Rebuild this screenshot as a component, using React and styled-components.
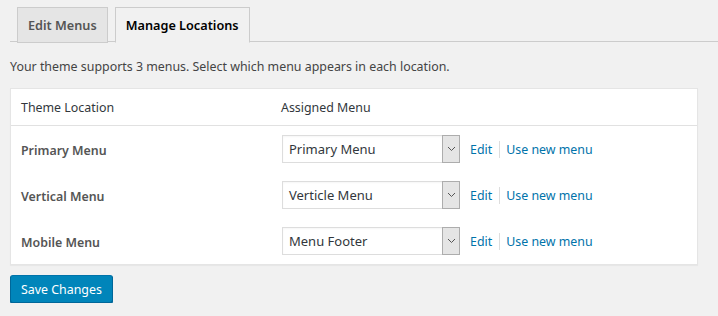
import React from "react";
import styled, { createGlobalStyle } from "styled-components";

const Global = createGlobalStyle`
  html, body { margin: 0; padding: 0; background: #f1f1f1; }
  body { font-family: "Noto Sans", "Open Sans", sans-serif; font-size: 12.4px; color: #444; }
  * { box-sizing: border-box; }
`;

const Wrap = styled.div`
  padding: 7px 0 0 10px;
`;

const Tabs = styled.div`
  display: flex;
  gap: 7px;
  padding-left: 7px;
  border-bottom: 1px solid #ccc;
  height: 35px;
`;

const Tab = styled.div`
  height: 36px;
  padding: 0 10px;
  display: flex;
  align-items: center;
  border: 1px solid #ccc;
  border-bottom-color: ${(p) => (p.$active ? "#f1f1f1" : "#ccc")};
  background: ${(p) => (p.$active ? "#f1f1f1" : "#e5e5e5")};
  color: ${(p) => (p.$active ? "#000" : "#555")};
  font-size: 12.7px;
  font-weight: 600;
`;

const Desc = styled.p`
  margin: 15px 0 0;
  line-height: 20px;
  color: #444;
`;

const Table = styled.div`
  margin: 11px 20px 0 0;
  background: #fff;
  border: 1px solid #e5e5e5;
  box-shadow: 0 1px 1px rgba(0, 0, 0, 0.04);
`;

const HeadRow = styled.div`
  display: grid;
  grid-template-columns: 260px 1fr;
  padding-left: 10px;
  height: 37px;
  align-items: center;
  border-bottom: 1px solid #e1e1e1;
  color: #32373c;
`;

const Row = styled.div`
  display: grid;
  grid-template-columns: 260px 1fr;
  padding-left: 10px;
  height: 46px;
  align-items: center;
`;

const Label = styled.div`
  font-weight: 600;
  color: #555;
  padding-top: 3px;
`;

const Cell = styled.div`
  display: flex;
  align-items: center;
`;

const Select = styled.div`
  width: 178px;
  height: 28px;
  margin-left: 1px;
  border: 1px solid #ddd;
  background: #fff;
  display: flex;
  align-items: stretch;
  color: #32373c;
  font-size: 13px;
  box-shadow: inset 0 1px 2px rgba(0, 0, 0, 0.04);
`;

const SelectText = styled.div`
  flex: 1;
  display: flex;
  align-items: center;
  padding-left: 6px;
`;

const Arrow = styled.div`
  width: 18px;
  margin: -1px -1px -1px 0;
  background: #e5e5e5;
  border: 1px solid #adadad;
  display: flex;
  align-items: center;
  justify-content: center;
`;

const Link = styled.a`
  color: #0073aa;
  text-decoration: none;
  margin-left: ${(p) => p.$ml || "0"};
`;

const Sep = styled.span`
  width: 1px;
  height: 17px;
  background: #ddd;
  margin: 0 6px 0 7px;
`;

const Button = styled.button`
  margin-top: 10px;
  height: 28px;
  padding: 0 10px;
  white-space: nowrap;
  background: #0085ba;
  border: 1px solid #0073aa;
  border-color: #0073aa #006799 #006799;
  border-radius: 3px;
  box-shadow: 0 1px 0 #006799;
  color: #fff;
  font-family: inherit;
  font-size: 12.4px;
  cursor: pointer;
`;

const rows = [
  ["Primary Menu", "Primary Menu"],
  ["Vertical Menu", "Verticle Menu"],
  ["Mobile Menu", "Menu Footer"],
];

const Chevron = () => (
  <svg width="9" height="6" viewBox="0 0 9 6">
    <path d="M1 1 L4.5 4.5 L8 1" fill="none" stroke="#555" strokeWidth="1" />
  </svg>
);

export default function App() {
  return (
    <>
      <Global />
      <Wrap>
        <Tabs>
          <Tab>Edit Menus</Tab>
          <Tab $active>Manage Locations</Tab>
        </Tabs>
        <Desc>Your theme supports 3 menus. Select which menu appears in each location.</Desc>
        <Table>
          <HeadRow>
            <div>Theme Location</div>
            <div>Assigned Menu</div>
          </HeadRow>
          {rows.map(([loc, menu]) => (
            <Row key={loc}>
              <Label>{loc}</Label>
              <Cell>
                <Select>
                  <SelectText>{menu}</SelectText>
                  <Arrow>
                    <Chevron />
                  </Arrow>
                </Select>
                <Link href="#" $ml="10px">Edit</Link>
                <Sep />
                <Link href="#">Use new menu</Link>
              </Cell>
            </Row>
          ))}
        </Table>
        <Button>Save Changes</Button>
      </Wrap>
    </>
  );
}
